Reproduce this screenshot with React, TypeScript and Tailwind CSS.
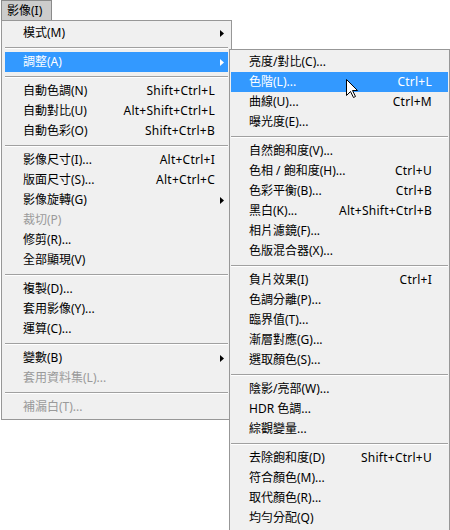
type Item =
  | { sep: true }
  | {
      sep?: false;
      label: string;
      shortcut?: string;
      sub?: boolean;
      disabled?: boolean;
      active?: boolean;
    };

const MAIN: Item[] = [
  { label: '模式(M)', sub: true },
  { sep: true },
  { label: '調整(A)', sub: true, active: true },
  { sep: true },
  { label: '自動色調(N)', shortcut: 'Shift+Ctrl+L' },
  { label: '自動對比(U)', shortcut: 'Alt+Shift+Ctrl+L' },
  { label: '自動色彩(O)', shortcut: 'Shift+Ctrl+B' },
  { sep: true },
  { label: '影像尺寸(I)...', shortcut: 'Alt+Ctrl+I' },
  { label: '版面尺寸(S)...', shortcut: 'Alt+Ctrl+C' },
  { label: '影像旋轉(G)', sub: true },
  { label: '裁切(P)', disabled: true },
  { label: '修剪(R)...' },
  { label: '全部顯現(V)' },
  { sep: true },
  { label: '複製(D)...' },
  { label: '套用影像(Y)...' },
  { label: '運算(C)...' },
  { sep: true },
  { label: '變數(B)', sub: true },
  { label: '套用資料集(L)...', disabled: true },
  { sep: true },
  { label: '補漏白(T)...', disabled: true },
];

const ADJUST: Item[] = [
  { label: '亮度/對比(C)...' },
  { label: '色階(L)...', shortcut: 'Ctrl+L', active: true },
  { label: '曲線(U)...', shortcut: 'Ctrl+M' },
  { label: '曝光度(E)...' },
  { sep: true },
  { label: '自然飽和度(V)...' },
  { label: '色相 / 飽和度(H)...', shortcut: 'Ctrl+U' },
  { label: '色彩平衡(B)...', shortcut: 'Ctrl+B' },
  { label: '黑白(K)...', shortcut: 'Alt+Shift+Ctrl+B' },
  { label: '相片濾鏡(F)...' },
  { label: '色版混合器(X)...' },
  { sep: true },
  { label: '負片效果(I)', shortcut: 'Ctrl+I' },
  { label: '色調分離(P)...' },
  { label: '臨界值(T)...' },
  { label: '漸層對應(G)...' },
  { label: '選取顏色(S)...' },
  { sep: true },
  { label: '陰影/亮部(W)...' },
  { label: 'HDR 色調...' },
  { label: '綜觀變量...' },
  { sep: true },
  { label: '去除飽和度(D)', shortcut: 'Shift+Ctrl+U' },
  { label: '符合顏色(M)...' },
  { label: '取代顏色(R)...' },
  { label: '均勻分配(Q)' },
];

function Arrow({ white }: { white?: boolean }) {
  return (
    <svg width="4" height="7" viewBox="0 0 4 7" className="absolute right-[4px] top-[7px]">
      <polygon points="0,0 4,3.5 0,7" fill={white ? '#ffffff' : '#000000'} />
    </svg>
  );
}

function MenuList({ items, pad }: { items: Item[]; pad: string }) {
  return (
    <>
      {items.map((it, i) => {
        if (it.sep) {
          return (
            <div key={i} className="h-[9px] pt-[4px]">
              <div className="h-px bg-[#a0a0a0]" />
              <div className="h-px bg-white" />
            </div>
          );
        }
        const color = it.active ? 'text-white' : it.disabled ? 'text-[#9a9a9a]' : 'text-black';
        return (
          <div
            key={i}
            className={`relative flex h-[20px] items-center ${pad} ${color} ${
              it.active ? 'bg-[#3399ff]' : ''
            }`}
          >
            <span className="flex-1 whitespace-pre">{it.label}</span>
            {it.shortcut && <span className="tracking-[0.25px]">{it.shortcut}</span>}
            {it.sub && <Arrow white={it.active} />}
          </div>
        );
      })}
    </>
  );
}

export default function App() {
  return (
    <div
      className="relative h-[530px] w-[450px] overflow-hidden bg-white text-[12px] leading-none"
      style={{ fontFamily: '"Noto Sans", "Noto Sans CJK TC", sans-serif' }}
    >
      {/* menu bar button */}
      <div className="ml-px flex h-[20px] w-[51px] items-center border border-b-0 border-[#8a8a8a] bg-[#cccccc] pl-[5px] text-black">
        影像(I)
      </div>

      {/* main menu */}
      <div className="ml-px w-[231px] border border-[#979797] bg-[#f0f0f0] px-[3px] py-[2px]">
        <MenuList items={MAIN} pad="pl-[18px] pr-[13px]" />
      </div>

      {/* adjustments submenu */}
      <div className="absolute left-[229px] top-[49px] w-[221px] border border-[#979797] bg-[#f0f0f0] px-px py-[2px]">
        <MenuList items={ADJUST} pad="pl-[18px] pr-[16px]" />
      </div>

      {/* mouse cursor */}
      <svg width="12" height="20" viewBox="0 0 12 20" className="absolute left-[346px] top-[79px]">
        <path
          d="M0.5 0.5 L0.5 16.5 L4.5 12.5 L7.5 18.5 L9.5 17.5 L6.5 11.5 L11.5 11.5 Z"
          fill="#ffffff"
          stroke="#000000"
          strokeWidth="1"
          strokeLinejoin="miter"
        />
      </svg>
    </div>
  );
}
